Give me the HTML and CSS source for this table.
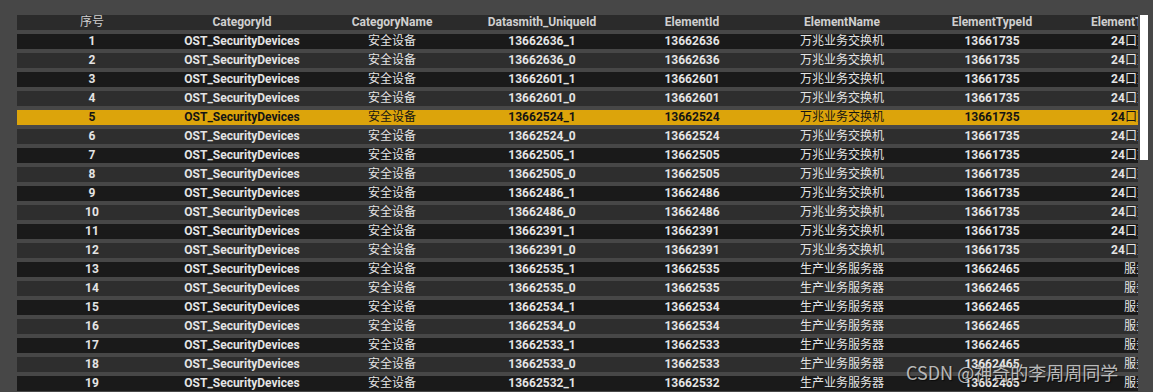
FILE: index.html
```html
<!DOCTYPE html>
<html lang="zh-CN">
<head>
<meta charset="utf-8">
<title>Datasmith Table</title>
<link rel="stylesheet" href="styles.css">
</head>
<body>
<div class="panel">
  <div class="table-clip">
    <div class="table">
      <div class="row header">
        <div class="cell cjk">序号</div>
        <div class="cell">CategoryId</div>
        <div class="cell">CategoryName</div>
        <div class="cell">Datasmith_UniqueId</div>
        <div class="cell">ElementId</div>
        <div class="cell">ElementName</div>
        <div class="cell">ElementTypeId</div>
        <div class="cell">ElementTypeName</div>
      </div>
      <div class="row odd"><div class="cell">1</div><div class="cell">OST_SecurityDevices</div><div class="cell cjk">安全设备</div><div class="cell">13662636_1</div><div class="cell">13662636</div><div class="cell cjk">万兆业务交换机</div><div class="cell">13661735</div><div class="cell">24<span class="cjk">口交换机</span></div></div>
      <div class="row even"><div class="cell">2</div><div class="cell">OST_SecurityDevices</div><div class="cell cjk">安全设备</div><div class="cell">13662636_0</div><div class="cell">13662636</div><div class="cell cjk">万兆业务交换机</div><div class="cell">13661735</div><div class="cell">24<span class="cjk">口交换机</span></div></div>
      <div class="row odd"><div class="cell">3</div><div class="cell">OST_SecurityDevices</div><div class="cell cjk">安全设备</div><div class="cell">13662601_1</div><div class="cell">13662601</div><div class="cell cjk">万兆业务交换机</div><div class="cell">13661735</div><div class="cell">24<span class="cjk">口交换机</span></div></div>
      <div class="row even"><div class="cell">4</div><div class="cell">OST_SecurityDevices</div><div class="cell cjk">安全设备</div><div class="cell">13662601_0</div><div class="cell">13662601</div><div class="cell cjk">万兆业务交换机</div><div class="cell">13661735</div><div class="cell">24<span class="cjk">口交换机</span></div></div>
      <div class="row selected"><div class="cell">5</div><div class="cell">OST_SecurityDevices</div><div class="cell cjk">安全设备</div><div class="cell">13662524_1</div><div class="cell">13662524</div><div class="cell cjk">万兆业务交换机</div><div class="cell">13661735</div><div class="cell">24<span class="cjk">口交换机</span></div></div>
      <div class="row even"><div class="cell">6</div><div class="cell">OST_SecurityDevices</div><div class="cell cjk">安全设备</div><div class="cell">13662524_0</div><div class="cell">13662524</div><div class="cell cjk">万兆业务交换机</div><div class="cell">13661735</div><div class="cell">24<span class="cjk">口交换机</span></div></div>
      <div class="row odd"><div class="cell">7</div><div class="cell">OST_SecurityDevices</div><div class="cell cjk">安全设备</div><div class="cell">13662505_1</div><div class="cell">13662505</div><div class="cell cjk">万兆业务交换机</div><div class="cell">13661735</div><div class="cell">24<span class="cjk">口交换机</span></div></div>
      <div class="row even"><div class="cell">8</div><div class="cell">OST_SecurityDevices</div><div class="cell cjk">安全设备</div><div class="cell">13662505_0</div><div class="cell">13662505</div><div class="cell cjk">万兆业务交换机</div><div class="cell">13661735</div><div class="cell">24<span class="cjk">口交换机</span></div></div>
      <div class="row odd"><div class="cell">9</div><div class="cell">OST_SecurityDevices</div><div class="cell cjk">安全设备</div><div class="cell">13662486_1</div><div class="cell">13662486</div><div class="cell cjk">万兆业务交换机</div><div class="cell">13661735</div><div class="cell">24<span class="cjk">口交换机</span></div></div>
      <div class="row even"><div class="cell">10</div><div class="cell">OST_SecurityDevices</div><div class="cell cjk">安全设备</div><div class="cell">13662486_0</div><div class="cell">13662486</div><div class="cell cjk">万兆业务交换机</div><div class="cell">13661735</div><div class="cell">24<span class="cjk">口交换机</span></div></div>
      <div class="row odd"><div class="cell">11</div><div class="cell">OST_SecurityDevices</div><div class="cell cjk">安全设备</div><div class="cell">13662391_1</div><div class="cell">13662391</div><div class="cell cjk">万兆业务交换机</div><div class="cell">13661735</div><div class="cell">24<span class="cjk">口交换机</span></div></div>
      <div class="row even"><div class="cell">12</div><div class="cell">OST_SecurityDevices</div><div class="cell cjk">安全设备</div><div class="cell">13662391_0</div><div class="cell">13662391</div><div class="cell cjk">万兆业务交换机</div><div class="cell">13661735</div><div class="cell">24<span class="cjk">口交换机</span></div></div>
      <div class="row odd"><div class="cell">13</div><div class="cell">OST_SecurityDevices</div><div class="cell cjk">安全设备</div><div class="cell">13662535_1</div><div class="cell">13662535</div><div class="cell cjk">生产业务服务器</div><div class="cell">13662465</div><div class="cell cjk">服务器</div></div>
      <div class="row even"><div class="cell">14</div><div class="cell">OST_SecurityDevices</div><div class="cell cjk">安全设备</div><div class="cell">13662535_0</div><div class="cell">13662535</div><div class="cell cjk">生产业务服务器</div><div class="cell">13662465</div><div class="cell cjk">服务器</div></div>
      <div class="row odd"><div class="cell">15</div><div class="cell">OST_SecurityDevices</div><div class="cell cjk">安全设备</div><div class="cell">13662534_1</div><div class="cell">13662534</div><div class="cell cjk">生产业务服务器</div><div class="cell">13662465</div><div class="cell cjk">服务器</div></div>
      <div class="row even"><div class="cell">16</div><div class="cell">OST_SecurityDevices</div><div class="cell cjk">安全设备</div><div class="cell">13662534_0</div><div class="cell">13662534</div><div class="cell cjk">生产业务服务器</div><div class="cell">13662465</div><div class="cell cjk">服务器</div></div>
      <div class="row odd"><div class="cell">17</div><div class="cell">OST_SecurityDevices</div><div class="cell cjk">安全设备</div><div class="cell">13662533_1</div><div class="cell">13662533</div><div class="cell cjk">生产业务服务器</div><div class="cell">13662465</div><div class="cell cjk">服务器</div></div>
      <div class="row even"><div class="cell">18</div><div class="cell">OST_SecurityDevices</div><div class="cell cjk">安全设备</div><div class="cell">13662533_0</div><div class="cell">13662533</div><div class="cell cjk">生产业务服务器</div><div class="cell">13662465</div><div class="cell cjk">服务器</div></div>
      <div class="row odd"><div class="cell">19</div><div class="cell">OST_SecurityDevices</div><div class="cell cjk">安全设备</div><div class="cell">13662532_1</div><div class="cell">13662532</div><div class="cell cjk">生产业务服务器</div><div class="cell">13662465</div><div class="cell cjk">服务器</div></div>
    </div>
  </div>
  <div class="scroll-track"><div class="scroll-thumb"></div></div>
</div>
<div class="watermark">CSDN @神奇的李周周同学</div>
</body>
</html>
```

FILE: styles.css
```css
html, body {
  margin: 0;
  padding: 0;
  width: 1153px;
  height: 392px;
  overflow: hidden;
  background: #474747;
}

body {
  position: relative;
  font-family: Roboto, "Noto Sans CJK SC", sans-serif;
  font-size: 12px;
}

.panel {
  display: flex;
  padding: 15px 0 0 17px;
  gap: 2px;
}

.table-clip {
  width: 1121px;
  overflow: hidden;
  flex: none;
}

.table {
  display: flex;
  flex-direction: column;
  gap: 4px;
  width: 1200px;
}

.row {
  display: grid;
  grid-template-columns: repeat(8, 150px);
  height: 15px;
  line-height: 15px;
  font-weight: 700;
  color: #e4e4e4;
}

.cell {
  text-align: center;
  white-space: nowrap;
  overflow: visible;
}

.cjk {
  font-weight: 400;
}

.header {
  background: #2b2b2b;
  color: #cfcfcf;
}

.odd {
  background: #1a1a1a;
}

.even {
  background: #2e2e2e;
}

.selected {
  background: #dca40b;
  color: #141414;
}

.scroll-track {
  width: 8px;
  flex: none;
}

.scroll-thumb {
  width: 8px;
  height: 145px;
  background: #ffffff;
}

.watermark {
  position: absolute;
  left: 906px;
  top: 361px;
  font-family: "Noto Sans CJK SC", sans-serif;
  font-size: 18px;
  line-height: 22px;
  color: rgba(225, 225, 225, 0.8);
  text-shadow: 1px 1px 1px rgba(0, 0, 0, 0.6);
  white-space: nowrap;
}
```
